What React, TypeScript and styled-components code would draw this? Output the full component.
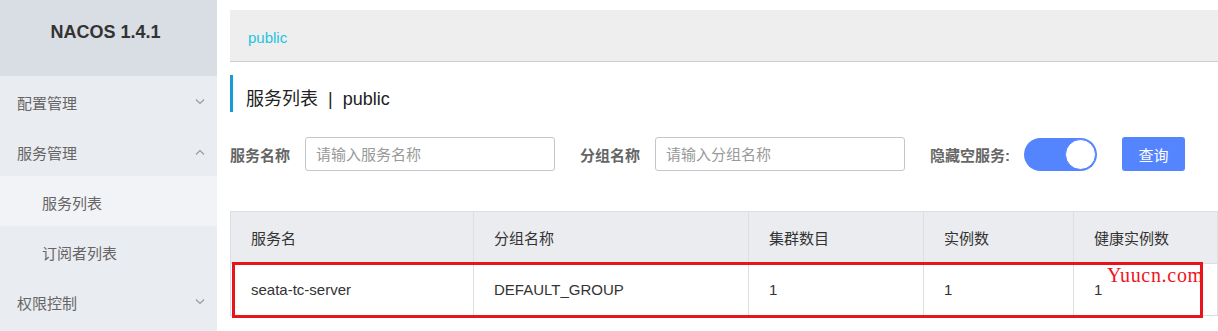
import styled, { createGlobalStyle } from "styled-components";

const GlobalStyle = createGlobalStyle`
  html, body {
    margin: 0;
    padding: 0;
    background: #fff;
    overflow: hidden;
  }
  body {
    font-family: "Liberation Sans", "Noto Sans CJK SC", sans-serif;
    font-size: 15px;
    color: #333;
  }
`;

const Layout = styled.div`
  display: flex;
  width: 100%;
  min-height: 100vh;
`;

const Sidebar = styled.aside`
  width: 217px;
  flex-shrink: 0;
  background: #e9ecf0;
  min-height: 100vh;
`;

const Brand = styled.div`
  height: 76px;
  background: #d9dde4;
  display: flex;
  align-items: center;
  justify-content: center;
  padding: 0 6px 11px 0;
  box-sizing: border-box;
  font-size: 18px;
  font-weight: 700;
  color: #333;
`;

const MenuItem = styled.div<{ $sub?: boolean; $active?: boolean }>`
  height: 50px;
  display: flex;
  align-items: center;
  justify-content: space-between;
  padding: 2px 12px 0 ${(p) => (p.$sub ? "42px" : "17px")};
  box-sizing: border-box;
  background: ${(p) => (p.$active ? "#f2f3f6" : "transparent")};
  color: #666;
  font-size: 15px;
`;

const Chevron = ({ up }: { up?: boolean }) => (
  <svg width="10" height="6" viewBox="0 0 10 6">
    <polyline
      points={up ? "1,5.5 5,1.5 9,5.5" : "1,0.5 5,4.5 9,0.5"}
      fill="none"
      stroke="#999"
      strokeWidth="1.1"
    />
  </svg>
);

const Main = styled.main`
  flex: 1;
  padding: 10px 0 0 13px;
  min-width: 0;
`;

const Breadcrumb = styled.div`
  background: #eeeeee;
  border-bottom: 1px solid #cfcfcf;
  padding: 17px 0 0 18px;
  height: 34px;
  line-height: 22px;
  color: #1ec3e0;
  font-size: 15px;
`;

const PageTitle = styled.h2`
  margin: 13px 0 0 0;
  height: 37px;
  border-left: 3px solid #1a9ad6;
  padding: 12px 0 0 13px;
  box-sizing: border-box;
  line-height: 24px;
  font-size: 18px;
  font-weight: 400;
  color: #222;
`;

const Divider = styled.span`
  margin: 0 10px;
`;

const FilterRow = styled.div`
  margin-top: 25px;
  display: flex;
  align-items: center;
  height: 34px;
`;

const Label = styled.span<{ $gap?: number }>`
  font-weight: 700;
  color: #666;
  font-size: 15px;
  margin-right: ${(p) => p.$gap ?? 15}px;
`;

const Input = styled.input`
  width: 250px;
  height: 34px;
  box-sizing: border-box;
  border: 1px solid #c4c6cf;
  border-radius: 3px;
  padding: 0 10px;
  font-family: inherit;
  font-size: 15px;
  color: #333;
  outline: none;
  margin-right: 25px;

  &::placeholder {
    color: #999;
  }
`;

const Switch = styled.div`
  width: 73px;
  height: 33px;
  border-radius: 17px;
  background: #5584ff;
  display: flex;
  align-items: center;
  justify-content: flex-end;
  padding: 1px;
  box-sizing: border-box;
  margin-right: 25px;
`;

const Knob = styled.div`
  width: 31px;
  height: 31px;
  border-radius: 50%;
  background: #fff;
  box-sizing: border-box;
  border: 1px solid #5584ff;
`;

const Button = styled.button`
  width: 63px;
  height: 34px;
  border: none;
  border-radius: 3px;
  background: #5584ff;
  color: #fff;
  font-family: inherit;
  font-size: 15px;
  padding: 0;
`;

const TableWrap = styled.div`
  position: relative;
  margin-top: 40px;
`;

const Table = styled.table`
  width: 100%;
  border-collapse: collapse;
  table-layout: fixed;
  border-top: 1px solid #dcdee3;
  border-left: 1px solid #dcdee3;
`;

const Th = styled.th`
  height: 51px;
  padding: 0 20px;
  background: #ebecf0;
  text-align: left;
  font-weight: 400;
  color: #333;
  font-size: 15px;
  border-right: 1px solid #dcdee3;
  border-bottom: 1px solid #dcdee3;
`;

const Td = styled.td`
  height: 51px;
  padding: 0 20px;
  color: #333;
  font-size: 15px;
  border-right: 1px solid #dcdee3;
  border-bottom: 1px solid #dcdee3;
`;

const Highlight = styled.div`
  position: absolute;
  left: 2px;
  top: 51px;
  width: 971px;
  height: 56px;
  border: 3px solid #e8141c;
  box-sizing: border-box;
  pointer-events: none;
`;

const Watermark = styled.span`
  position: absolute;
  left: 877px;
  top: 53px;
  font-family: "Liberation Serif", serif;
  font-size: 20px;
  letter-spacing: 0.7px;
  color: #f0141e;
  white-space: nowrap;
`;

const columns = [
  { title: "服务名", width: 243 },
  { title: "分组名称", width: 275 },
  { title: "集群数目", width: 175 },
  { title: "实例数", width: 150 },
  { title: "健康实例数", width: undefined },
];

const rows = [["seata-tc-server", "DEFAULT_GROUP", "1", "1", "1"]];

export default function App() {
  return (
    <>
      <GlobalStyle />
      <Layout>
        <Sidebar>
          <Brand>NACOS 1.4.1</Brand>
          <MenuItem>
            配置管理
            <Chevron />
          </MenuItem>
          <MenuItem>
            服务管理
            <Chevron up />
          </MenuItem>
          <MenuItem $sub $active>
            服务列表
          </MenuItem>
          <MenuItem $sub>订阅者列表</MenuItem>
          <MenuItem>
            权限控制
            <Chevron />
          </MenuItem>
        </Sidebar>
        <Main>
          <Breadcrumb>public</Breadcrumb>
          <PageTitle>
            服务列表<Divider>|</Divider>public
          </PageTitle>
          <FilterRow>
            <Label>服务名称</Label>
            <Input placeholder="请输入服务名称" />
            <Label>分组名称</Label>
            <Input placeholder="请输入分组名称" />
            <Label $gap={14}>隐藏空服务:</Label>
            <Switch>
              <Knob />
            </Switch>
            <Button>查询</Button>
          </FilterRow>
          <TableWrap>
            <Table>
              <colgroup>
                {columns.map((c) => (
                  <col key={c.title} style={c.width ? { width: c.width } : undefined} />
                ))}
              </colgroup>
              <thead>
                <tr>
                  {columns.map((c) => (
                    <Th key={c.title}>{c.title}</Th>
                  ))}
                </tr>
              </thead>
              <tbody>
                {rows.map((r) => (
                  <tr key={r[0]}>
                    {r.map((v, i) => (
                      <Td key={i}>{v}</Td>
                    ))}
                  </tr>
                ))}
              </tbody>
            </Table>
            <Watermark>Yuucn.com</Watermark>
            <Highlight />
          </TableWrap>
        </Main>
      </Layout>
    </>
  );
}
